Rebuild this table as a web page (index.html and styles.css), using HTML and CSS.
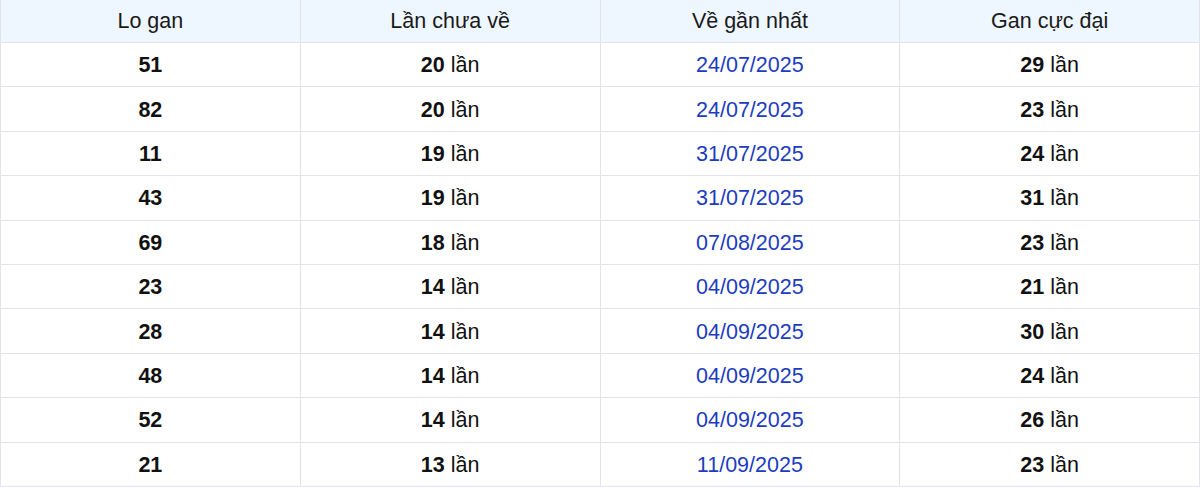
FILE: index.html
```html
<!DOCTYPE html>
<html lang="vi">
<head>
<meta charset="utf-8">
<link rel="stylesheet" href="styles.css">
</head>
<body>
<table class="gan-table">
  <thead>
    <tr><th>Lo gan</th><th>Lần chưa về</th><th>Về gần nhất</th><th>Gan cực đại</th></tr>
  </thead>
  <tbody>
    <tr><td><b>51</b></td><td><b>20</b> lần</td><td class="date">24/07/2025</td><td><b>29</b> lần</td></tr>
    <tr><td><b>82</b></td><td><b>20</b> lần</td><td class="date">24/07/2025</td><td><b>23</b> lần</td></tr>
    <tr><td><b>11</b></td><td><b>19</b> lần</td><td class="date">31/07/2025</td><td><b>24</b> lần</td></tr>
    <tr><td><b>43</b></td><td><b>19</b> lần</td><td class="date">31/07/2025</td><td><b>31</b> lần</td></tr>
    <tr><td><b>69</b></td><td><b>18</b> lần</td><td class="date">07/08/2025</td><td><b>23</b> lần</td></tr>
    <tr><td><b>23</b></td><td><b>14</b> lần</td><td class="date">04/09/2025</td><td><b>21</b> lần</td></tr>
    <tr><td><b>28</b></td><td><b>14</b> lần</td><td class="date">04/09/2025</td><td><b>30</b> lần</td></tr>
    <tr><td><b>48</b></td><td><b>14</b> lần</td><td class="date">04/09/2025</td><td><b>24</b> lần</td></tr>
    <tr><td><b>52</b></td><td><b>14</b> lần</td><td class="date">04/09/2025</td><td><b>26</b> lần</td></tr>
    <tr><td><b>21</b></td><td><b>13</b> lần</td><td class="date">11/09/2025</td><td><b>23</b> lần</td></tr>
  </tbody>
</table>
</body>
</html>
```

FILE: styles.css
```css
html, body {
  margin: 0;
  padding: 0;
  background: #ffffff;
}
body {
  font-family: "Liberation Sans", Arial, sans-serif;
  color: #111;
}
.gan-table {
  width: 1200px;
  border-collapse: collapse;
  table-layout: fixed;
  font-size: 21.5px;
}
.gan-table th,
.gan-table td {
  border: 1.5px solid #e0e3ea;
  text-align: center;
  vertical-align: middle;
  padding: 0;
}
.gan-table tr:first-child th {
  border-top: none;
}
.gan-table th {
  background: #eef6ff;
  font-weight: 400;
  height: 42px;
  color: #1a1a1a;
}
.gan-table td {
  height: 41.4px;
  padding-top: 2px;
  color: #111;
}
.gan-table td b {
  font-weight: 700;
}
.gan-table td.date {
  color: #1c3cc0;
}
```
